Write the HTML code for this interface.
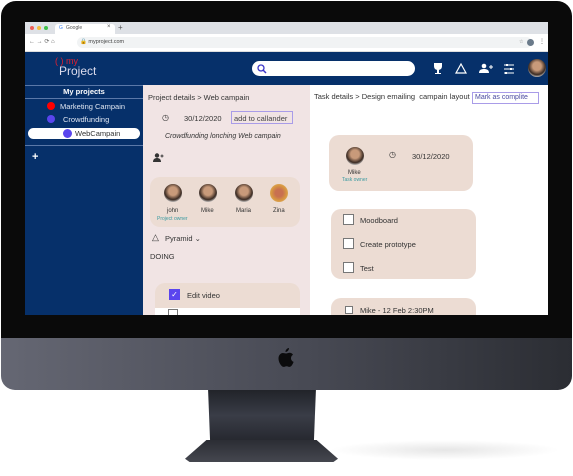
<!DOCTYPE html>
<html><head><meta charset="utf-8"><style>
*{margin:0;padding:0;box-sizing:border-box}
body{width:573px;height:476px;background:#fff;position:relative;overflow:hidden;font-family:"Liberation Sans",sans-serif}
.a{position:absolute}
.t{position:absolute;white-space:nowrap;color:#333;font-size:7.5px}
.av{position:absolute;border-radius:50%;background:radial-gradient(circle at 50% 40%,#c89a7a 0 30%,#3a2a22 60%,#d8d8d8 80%)}
.cb{position:absolute;width:10px;height:10px;border:1px solid #777;background:#fff}
</style></head><body>
<div class="a" style="left:330px;top:440px;width:230px;height:20px;border-radius:50%;background:radial-gradient(ellipse,#e6e6e6,#fff 70%)"></div>
<div class="a" style="left:208px;top:388px;width:108px;height:55px;background:linear-gradient(#1f2127,#3a3d47 50%,#24262d);clip-path:polygon(0 0,100% 0,98% 100%,2% 100%)"></div>
<div class="a" style="left:185px;top:440px;width:153px;height:22px;background:linear-gradient(#2b2d34,#45474f);clip-path:polygon(14% 0,86% 0,100% 85%,97% 100%,3% 100%,0 85%)"></div>
<div class="a" style="left:1px;top:330px;width:571px;height:60px;border-radius:0 0 14px 14px;background:linear-gradient(90deg,#656773,#474953 55%,#2b2d33)"></div>
<svg class="a" style="left:276px;top:347px" width="20" height="24" viewBox="0 0 20 24"><path d="M13 1c0 2-1.5 4-3.5 4C9.4 3 11 1.2 13 1zM10 6.5c1.2 0 2.3-.8 3.5-.8 1.5 0 2.8.8 3.5 2-3 1.7-2.5 6 .6 7.2-.8 2.2-2.3 5-4 5-1.2 0-1.6-.7-3-.7s-1.9.7-3 .7C5.5 20 2.5 15.5 2.5 11.5c0-3.5 2.3-5.5 4.3-5.5 1.3 0 2.2.5 3.2.5z" fill="#0b0b0c"/></svg>
<div class="a" style="left:1px;top:1px;width:571px;height:337px;background:#0a0a0a;border-radius:15px 15px 0 0"></div>
<div class="a" style="left:25px;top:22px;width:523px;height:293px;background:#fff;overflow:hidden">
 <div class="a" style="left:0;top:0;width:523px;height:12px;background:#dee1e6"></div>
 <div class="a" style="left:5px;top:4px;width:4px;height:4px;border-radius:50%;background:#ee5e56"></div>
 <div class="a" style="left:12px;top:4px;width:4px;height:4px;border-radius:50%;background:#f4bd3b"></div>
 <div class="a" style="left:19px;top:4px;width:4px;height:4px;border-radius:50%;background:#3fc14b"></div>
 <div class="a" style="left:30px;top:2px;width:60px;height:10px;background:#fff;border-radius:3px 3px 0 0"></div>
 <div class="t" style="left:34px;top:3px;font-size:5px;color:#4285f4">G</div>
 <div class="t" style="left:41px;top:3px;font-size:5px;color:#555">Google</div>
 <div class="t" style="left:82px;top:2px;font-size:6px;color:#555">×</div>
 <div class="t" style="left:93px;top:1px;font-size:8px;color:#555">+</div>
 <div class="a" style="left:0;top:12px;width:523px;height:18px;background:#fff;border-bottom:1px solid #ddd"></div>
 <div class="t" style="left:4px;top:16px;font-size:6px;color:#666">← → ⟳ ⌂</div>
 <div class="a" style="left:52px;top:15px;width:455px;height:11px;border-radius:6px;background:#f1f3f4"></div>
 <div class="t" style="left:55px;top:17px;font-size:5.5px;color:#444">🔒 myproject.com</div>
 <div class="t" style="left:494px;top:17px;font-size:5px;color:#777">☆</div>
 <div class="a" style="left:502px;top:17px;width:7px;height:7px;border-radius:50%;background:#6a7a8a"></div>
 <div class="t" style="left:514px;top:16px;font-size:6px;color:#555">⋮</div>
 <div class="a" style="left:0;top:30px;width:523px;height:33px;background:#06306a"></div>
 <div class="t" style="left:30px;top:34px;font-size:9px;color:#e02030">( ) <span style="font-size:9px">my</span></div>
 <div class="t" style="left:34px;top:42px;font-size:12px;color:#dde">Project</div>
 <div class="a" style="left:227px;top:39px;width:163px;height:15px;border-radius:8px;background:#fff"></div>
 <svg class="a" style="left:232px;top:42px" width="10" height="10"><circle cx="4" cy="4" r="3" fill="none" stroke="#3b35c8" stroke-width="1.3"/><path d="M6 6l3 3" stroke="#3b35c8" stroke-width="1.5"/></svg>
 <svg class="a" style="left:407px;top:40px" width="100" height="14" fill="#fff">
  <path d="M2 1h8v3c0 3-2 4-4 4S2 7 2 4zM5 8h2v3h2v1H3v-1h2z"/>
  <path d="M29 2l5 9h-10z" fill="none" stroke="#fff" stroke-width="1.2"/>
  <circle cx="52" cy="4" r="2.3"/><path d="M47 11c0-3 2-4 5-4s5 1 5 4z"/><path d="M57 5h4M59 3v4" stroke="#fff"/>
  <path d="M72 3h10M72 7h10M72 11h10" stroke="#fff"/><path d="M75 2v2M79 6v2M74 10v2" stroke="#fff" stroke-width="2"/>
 </svg>
 <div class="av" style="left:503px;top:37px;width:18px;height:18px"></div>
 <div class="a" style="left:0;top:63px;width:118px;height:230px;background:#06306a;border-top:1px solid #5a78a8"></div>
 <div class="t" style="left:0;top:65px;width:118px;text-align:center;color:#fff;font-size:7.5px;font-weight:bold">My projects</div>
 <div class="a" style="left:0;top:76px;width:118px;height:1px;background:#5a78a8"></div>
 <div class="a" style="left:22px;top:80px;width:8px;height:8px;border-radius:50%;background:#f00"></div>
 <div class="t" style="left:35px;top:80px;color:#dfe6f2;font-size:7.5px">Marketing Campain</div>
 <div class="a" style="left:22px;top:93px;width:8px;height:8px;border-radius:50%;background:#5a45ee"></div>
 <div class="t" style="left:38px;top:93px;color:#dfe6f2;font-size:7.5px">Crowdfunding</div>
 <div class="a" style="left:3px;top:106px;width:112px;height:11px;border-radius:6px;background:#fff"></div>
 <div class="a" style="left:38px;top:107px;width:9px;height:9px;border-radius:50%;background:#5a45ee"></div>
 <div class="t" style="left:50px;top:107px;color:#333;font-size:7.5px">WebCampain</div>
 <div class="a" style="left:0;top:123px;width:118px;height:1px;background:#5a78a8"></div>
 <div class="t" style="left:7px;top:129px;color:#fff;font-size:11px;font-weight:bold">+</div>
 <div class="a" style="left:118px;top:63px;width:167px;height:230px;background:#f1e4e4"></div>
 <div class="t" style="left:123px;top:71px">Project details &gt; Web campain</div>
 <div class="t" style="left:137px;top:91px;font-size:8px">◷</div>
 <div class="t" style="left:159px;top:92px">30/12/2020</div>
 <div class="a" style="left:206px;top:89px;width:62px;height:13px;border:1px solid #a99ce8"></div>
 <div class="t" style="left:209px;top:92px;color:#444">add to callander</div>
 <div class="t" style="left:140px;top:111px;font-size:7px;font-style:italic">Crowdfunding lonching Web campain</div>
 <svg class="a" style="left:128px;top:131px" width="11" height="9" fill="#333"><circle cx="4" cy="2.5" r="2.2"/><path d="M0 9c0-3 2-4 4-4s4 1 4 4z"/><path d="M7.5 3h3M9 1.5v3" stroke="#333"/></svg>
 <div class="a" style="left:125px;top:155px;width:150px;height:50px;border-radius:10px;background:#ecdcd3"></div>
 <div class="av" style="left:139px;top:162px;width:18px;height:18px"></div>
 <div class="av" style="left:174px;top:162px;width:18px;height:18px"></div>
 <div class="av" style="left:210px;top:162px;width:18px;height:18px"></div>
 <div class="av" style="left:245px;top:162px;width:18px;height:18px;background:radial-gradient(circle,#c87050 0 30%,#d89840 60%,#e0c090)"></div>
 <div class="t" style="left:142px;top:186px;font-size:6px">john</div>
 <div class="t" style="left:176px;top:186px;font-size:6px">Mike</div>
 <div class="t" style="left:211px;top:186px;font-size:6px">Maria</div>
 <div class="t" style="left:248px;top:186px;font-size:6px">Zina</div>
 <div class="t" style="left:132px;top:194px;font-size:5px;color:#3a9aa0">Project owner</div>
 <div class="t" style="left:127px;top:210px;font-size:9px">△</div>
 <div class="t" style="left:140px;top:212px">Pyramid ⌄</div>
 <div class="t" style="left:125px;top:230px">DOING</div>
 <div class="a" style="left:130px;top:261px;width:145px;height:40px;border-radius:10px;background:#ecdcd3"></div>
 <div class="a" style="left:130px;top:286px;width:145px;height:10px;background:#fff"></div>
 <div class="a" style="left:144px;top:267px;width:11px;height:11px;background:#5a45ee;color:#fff;font-size:8px;text-align:center;line-height:11px">✓</div>
 <div class="t" style="left:162px;top:269px">Edit video</div>
 <div class="cb" style="left:143px;top:287px"></div>
 <div class="t" style="left:289px;top:70px">Task details &gt; Design emailing&nbsp; campain layout</div>
 <div class="a" style="left:447px;top:70px;width:67px;height:12px;border:1px solid #a99ce8"></div>
 <div class="t" style="left:450px;top:72px;font-size:7px;color:#4a4aa0">Mark as complite</div>
 <div class="a" style="left:304px;top:113px;width:144px;height:56px;border-radius:10px;background:#ecdcd3"></div>
 <div class="av" style="left:321px;top:125px;width:18px;height:18px"></div>
 <div class="t" style="left:323px;top:148px;font-size:6px">Mike</div>
 <div class="t" style="left:317px;top:155px;font-size:5px;color:#3a9aa0">Task owner</div>
 <div class="t" style="left:364px;top:128px;font-size:8px">◷</div>
 <div class="t" style="left:387px;top:130px">30/12/2020</div>
 <div class="a" style="left:306px;top:187px;width:145px;height:70px;border-radius:10px;background:#ecdcd3"></div>
 <div class="cb" style="left:318px;top:192px;width:11px;height:11px"></div>
 <div class="t" style="left:335px;top:194px">Moodboard</div>
 <div class="cb" style="left:318px;top:216px;width:11px;height:11px"></div>
 <div class="t" style="left:335px;top:218px">Create prototype</div>
 <div class="cb" style="left:318px;top:240px;width:11px;height:11px"></div>
 <div class="t" style="left:335px;top:242px">Test</div>
 <div class="a" style="left:306px;top:276px;width:145px;height:30px;border-radius:10px;background:#ecdcd3"></div>
 <div class="cb" style="left:320px;top:284px;width:8px;height:8px"></div>
 <div class="t" style="left:335px;top:284px">Mike - 12 Feb 2:30PM</div>
</div>
</body></html>
